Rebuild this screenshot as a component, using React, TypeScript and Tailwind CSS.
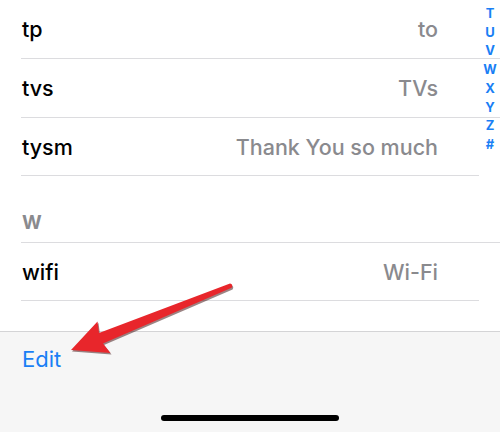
import React from 'react';

const font = { fontFamily: 'Inter, "Noto Sans", sans-serif' };

const index = ['T', 'U', 'V', 'W', 'X', 'Y', 'Z', '#'];

interface RowProps {
  label: string;
  value: string;
  h: string;
  full?: boolean;
}

const Row: React.FC<RowProps> = ({ label, value, h, full }) => (
  <div className={`ml-[21px] ${full ? 'mr-0' : 'mr-[21px]'} ${h} flex items-center border-b border-[#dcdcdf]`}>
    <span className="flex-1 pl-[1px] text-[21.5px] leading-6 font-medium text-black">{label}</span>
    <span className={`${full ? 'pr-[62px]' : 'pr-[41px]'} text-[21.5px] leading-6 font-medium text-[#8a8a8e]`}>{value}</span>
  </div>
);

const Arrow = () => (
  <svg className="absolute left-0 top-0 pointer-events-none" width="500" height="432" viewBox="0 0 500 432">
    <g transform="translate(1 1.6)" fill="#3a0a0a" opacity="0.5">
      <path d="M71 350 L97.5 321.5 L99 333 L230 283.6 Q233.5 284.5 231.6 287.8 L103 343.5 L110.5 353 Z" />
    </g>
    <path d="M71 350 L97.5 321.5 L99 333 L230 283.6 Q233.5 284.5 231.6 287.8 L103 343.5 L110.5 353 Z" fill="#e8262b" />
  </svg>
);

export default function App() {
  return (
    <div className="relative w-[500px] h-[432px] overflow-hidden bg-white flex flex-col" style={font}>
      <Row label="tp" value="to" h="h-[59px]" full />
      <Row label="tvs" value="TVs" h="h-[59px]" full />
      <Row label="tysm" value="Thank You so much" h="h-[58px]" />
      <div className="ml-[21px] h-[67px] flex items-end pb-[8px] border-b border-[#dcdcdf]">
        <span className="pl-[1px] text-[19px] leading-[22px] font-bold text-[#8a8a8e]">W</span>
      </div>
      <Row label="wifi" value="Wi-Fi" h="h-[58px]" />
      <div className="h-[30px]" />
      <div className="flex-1 bg-[#f6f6f6] border-t border-[#d4d4d6] flex flex-col">
        <span className="ml-[22px] mt-[15px] text-[22px] leading-6 text-[#1a7ff5]">Edit</span>
        <div className="mx-auto mt-[44px] w-[178px] h-[6px] rounded-full bg-black" />
      </div>

      <div className="absolute right-0 top-[4px] w-[20px] flex flex-col items-center text-[13px] leading-[18.7px] font-bold text-[#1a7ff5]">
        {index.map((c) => (
          <span key={c}>{c}</span>
        ))}
      </div>
      <Arrow />
    </div>
  );
}
